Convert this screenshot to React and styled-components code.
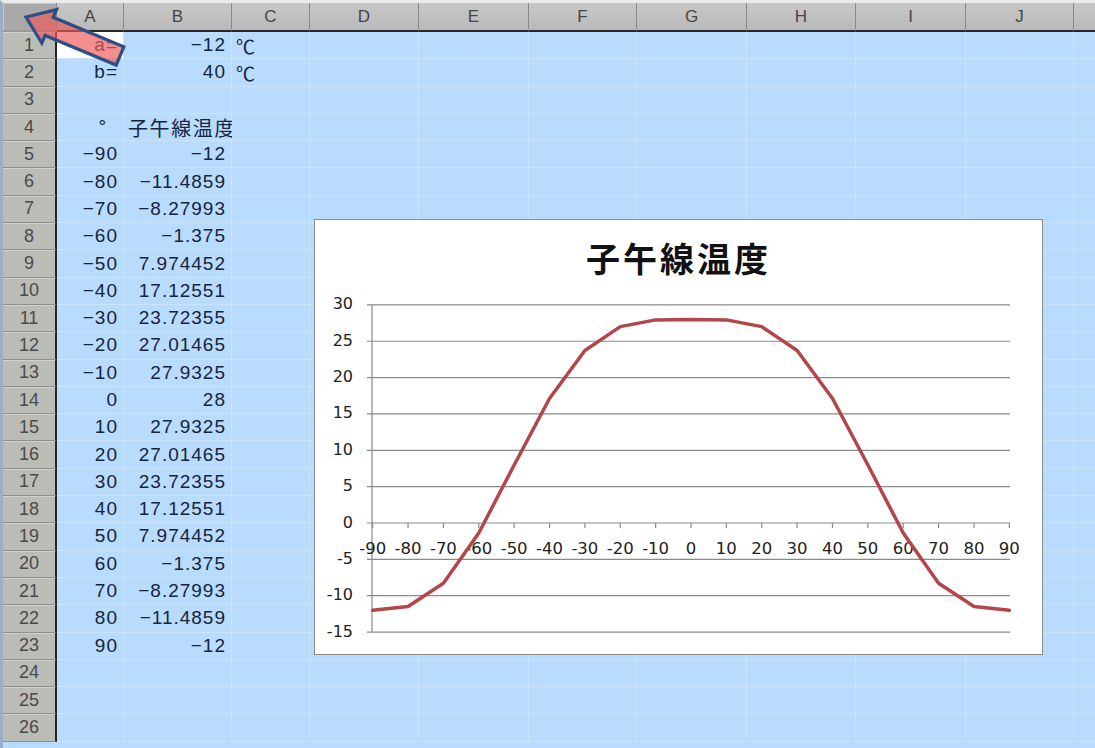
import React from 'react';
import styled, { createGlobalStyle } from 'styled-components';

const GlobalStyle = createGlobalStyle`
  body {
    margin: 0;
    overflow: hidden;
    background: #b9dbfd;
  }
`;

const columnas = ['A', 'B', 'C', 'D', 'E', 'F', 'G', 'H', 'I', 'J', 'K'];
const anchos = [67, 108, 78, 109, 110, 108, 110, 109, 110, 108, 108];

// valores de la tabla
const grados = [-90, -80, -70, -60, -50, -40, -30, -20, -10, 0, 10, 20, 30, 40, 50, 60, 70, 80, 90];
const temps = [
  '-12', '-11.4859', '-8.27993', '-1.375', '7.974452', '17.12551', '23.72355', '27.01465', '27.9325', '28',
  '27.9325', '27.01465', '23.72355', '17.12551', '7.974452', '-1.375', '-8.27993', '-11.4859', '-12',
];

const m = (s) => s.replace('-', '\u2212');

const celdas = {
  '1-A': { text: 'a=', align: 'right' },
  '1-B': { text: m('-12'), align: 'right' },
  '1-C': { text: '℃', align: 'left' },
  '2-A': { text: 'b=', align: 'right' },
  '2-B': { text: '40', align: 'right' },
  '2-C': { text: '℃', align: 'left' },
  '4-A': { text: '°', align: 'right', pad: 16 },
  '4-B': { text: '子午線温度', align: 'left', cjk: true },
};
grados.forEach((g, i) => {
  celdas[`${i + 5}-A`] = { text: m(String(g)), align: 'right' };
  celdas[`${i + 5}-B`] = { text: m(temps[i]), align: 'right' };
});

const Hoja = styled.div`
  position: relative;
  width: 1095px;
  height: 748px;
  overflow: hidden;
  box-sizing: border-box;
  border-top: 3px solid #ebebeb;
  border-left: 3px solid #9aaec8;
`;

const Rejilla = styled.div`
  display: grid;
  grid-template-columns: 54px ${anchos.map((w) => `${w}px`).join(' ')};
  grid-template-rows: 29px repeat(26, 27.3px);
  width: max-content;
`;

const Esquina = styled.div`
  box-sizing: border-box;
  background: #a9a9a9;
  border-right: 1px solid #8a8a8a;
  border-bottom: 2px solid #9a9a9a;
  box-shadow: inset 1px 1px 0 #c8c8c8;
`;

const CabeceraCol = styled.div`
  box-sizing: border-box;
  display: flex;
  align-items: center;
  justify-content: center;
  background: linear-gradient(#c8c8c8, #b9b9b9);
  border-right: 1px solid #8a8a8a;
  border-bottom: 2px solid #262626;
  font: 17px 'Liberation Sans', sans-serif;
  color: #454545;
`;

const CabeceraFila = styled.div`
  box-sizing: border-box;
  display: flex;
  align-items: center;
  justify-content: center;
  background: #bcbcb6;
  border-bottom: 1px solid #8e8e8a;
  border-right: 2px solid #262626;
  box-shadow: inset 0 1px 0 #d2d2cc;
  font: 18px 'Liberation Sans', sans-serif;
  color: #4a4a4a;
`;

const Celda = styled.div`
  box-sizing: border-box;
  display: flex;
  align-items: center;
  justify-content: ${(p) => (p.$align === 'left' ? 'flex-start' : 'flex-end')};
  padding: 0 ${(p) => p.$pad || 5}px 0 4px;
  background: ${(p) => (p.$activa ? '#ffffff' : '#b9dbfd')};
  border-right: 1px solid #cce3fc;
  border-bottom: 1px solid #cce3fc;
  white-space: nowrap;
  font-family: 'Liberation Sans', 'Noto Sans CJK JP', sans-serif;
  font-size: ${(p) => (p.$cjk ? 20 : 19)}px;
  letter-spacing: ${(p) => (p.$cjk ? 1.6 : 1)}px;
  color: #16243e;
`;

const Grafico = styled.div`
  position: absolute;
  left: 311px;
  top: 216px;
  width: 729px;
  height: 436px;
  box-sizing: border-box;
  background: #ffffff;
  border: 1px solid #8c8c8c;
  display: flex;
  flex-direction: column;
`;

const Titulo = styled.div`
  height: 70px;
  box-sizing: border-box;
  padding-top: 21px;
  text-align: center;
  font: 700 34px 'Noto Sans CJK JP', sans-serif;
  line-height: 1;
  letter-spacing: 3px;
  color: #111;
`;

const Flecha = styled.svg`
  position: absolute;
  left: -3px;
  top: -3px;
  pointer-events: none;
`;

// escalas del grafico
const xs = (v) => 376 + v * 3.537;
const ys = (t) => 233 - t * 7.27;
const ejeY = [30, 25, 20, 15, 10, 5, 0, -5, -10, -15];
const valores = temps.map((t) => parseFloat(t));

const Lienzo = () => {
  const linea = grados.map((g, i) => `${i ? 'L' : 'M'}${xs(g).toFixed(1)},${ys(valores[i]).toFixed(1)}`).join(' ');
  return (
    <svg width="727" height="364" style={{ display: 'block' }}>
      {ejeY.map((t) => (
        <g key={t}>
          <line x1="52" x2="695" y1={ys(t)} y2={ys(t)} stroke="#8a8a8a" strokeWidth="1.2" />
          <text
            x="38"
            y={ys(t)}
            textAnchor="end"
            dominantBaseline="middle"
            fontFamily="'DejaVu Sans', sans-serif"
            fontSize="16"
            fill="#222"
          >
            {t}
          </text>
        </g>
      ))}
      <line x1="57" x2="57" y1={ys(30)} y2={ys(-15)} stroke="#8a8a8a" strokeWidth="1.2" />
      {grados.map((g) => (
        <g key={g}>
          <line x1={xs(g)} x2={xs(g)} y1={ys(0)} y2={ys(0) + 5} stroke="#8a8a8a" strokeWidth="1.2" />
          <text
            x={xs(g)}
            y={259}
            textAnchor="middle"
            dominantBaseline="middle"
            fontFamily="'DejaVu Sans', sans-serif"
            fontSize="16.5"
            fill="#222"
          >
            {g}
          </text>
        </g>
      ))}
      <path d={linea} fill="none" stroke="#b3464a" strokeWidth="3.5" strokeLinejoin="round" strokeLinecap="round" />
    </svg>
  );
};

export default function App() {
  const filas = Array.from({ length: 26 }, (_, i) => i + 1);
  return (
    <>
      <GlobalStyle />
      <Hoja>
        <Rejilla>
          <Esquina />
          {columnas.map((c) => (
            <CabeceraCol key={c}>{c === 'K' ? '' : c}</CabeceraCol>
          ))}
          {filas.map((f) => (
            <React.Fragment key={f}>
              <CabeceraFila>{f}</CabeceraFila>
              {columnas.map((c) => {
                const d = celdas[`${f}-${c}`];
                return (
                  <Celda
                    key={c}
                    $align={d?.align}
                    $pad={d?.pad}
                    $cjk={d?.cjk}
                    $activa={f === 1 && c === 'A'}
                  >
                    {d?.text}
                  </Celda>
                );
              })}
            </React.Fragment>
          ))}
        </Rejilla>
        <Grafico>
          <Titulo>子午線温度</Titulo>
          <Lienzo />
        </Grafico>
        <Flecha width="140" height="80">
          <polygon
            points="26,17 56.5,9.6 53.2,17.3 123.8,46.8 116.2,65.1 45.1,35.4 41.8,43.1"
            fill="#ef5a5a"
            fillOpacity="0.68"
            stroke="#2d4f86"
            strokeWidth="3.2"
            strokeLinejoin="miter"
          />
        </Flecha>
      </Hoja>
    </>
  );
}
